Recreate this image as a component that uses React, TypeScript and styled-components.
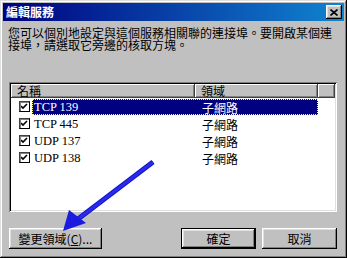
import React from "react";
import styled, { createGlobalStyle, css } from "styled-components";

const GlobalStyle = createGlobalStyle`
  html, body {
    margin: 0;
    padding: 0;
    background: #c0c0c0;
  }
  * {
    box-sizing: border-box;
  }
`;

const uiFont = `"Noto Sans CJK TC", "Liberation Sans", sans-serif`;
const listFont = `"Liberation Serif", "Noto Sans CJK TC", serif`;

const raised = css`
  box-shadow: inset -1px -1px #000000, inset 1px 1px #ffffff,
    inset -2px -2px #808080, inset 2px 2px #dfdfdf;
`;

const Window = styled.div`
  position: relative;
  width: 347px;
  height: 258px;
  padding: 3px;
  background: #c0c0c0;
  box-shadow: inset -1px -1px #000000, inset 1px 1px #dfdfdf,
    inset -2px -2px #808080, inset 2px 2px #ffffff;
  display: flex;
  flex-direction: column;
  font-family: ${uiFont};
  font-size: 12px;
  color: #000;
`;

const TitleBar = styled.div`
  height: 18px;
  display: flex;
  align-items: center;
  justify-content: space-between;
  padding: 0 2px 0 3px;
  background: linear-gradient(to right, #000080, #1084d0);
`;

const TitleText = styled.span`
  color: #ffffff;
  font-weight: bold;
  font-size: 12px;
  line-height: 18px;
`;

const CloseButton = styled.div`
  width: 16px;
  height: 14px;
  background: #c0c0c0;
  ${raised};
  display: flex;
  align-items: center;
  justify-content: center;
`;

const Body = styled.div`
  flex: 1;
  display: flex;
  flex-direction: column;
  padding: 6px 7px 0 5px;
`;

const Description = styled.p`
  margin: 0;
  line-height: 12px;
  width: 330px;
`;

const ListView = styled.div`
  margin: 31px 0 0 1px;
  width: 328px;
  height: 130px;
  background: #ffffff;
  padding: 2px;
  box-shadow: inset 1px 1px #808080, inset -1px -1px #ffffff,
    inset 2px 2px #000000, inset -2px -2px #dfdfdf;
  display: flex;
  flex-direction: column;
`;

const Header = styled.div`
  display: flex;
  height: 14px;
  background: #c0c0c0;
`;

const HeaderCell = styled.div<{ $width?: number }>`
  ${(p) => (p.$width ? `width: ${p.$width}px;` : "flex: 1;")}
  height: 14px;
  line-height: 14px;
  padding-left: 6px;
  box-shadow: inset -1px -1px #404040, inset 1px 1px #ffffff,
    inset -2px -2px #808080;
`;

const Row = styled.div`
  display: flex;
  align-items: center;
  height: 17px;
  font-family: ${listFont};
`;

const CheckCell = styled.div`
  width: 21px;
  display: flex;
  padding-left: 8px;
`;

const CheckBox = styled.div`
  width: 11px;
  height: 11px;
  background: #ffffff;
  border: 1px solid #000000;
  border-top-color: #404040;
  border-left-color: #404040;
  box-shadow: inset 1px 1px #808080;
  display: flex;
  align-items: center;
  justify-content: center;
`;

const RowLabel = styled.div<{ $selected?: boolean }>`
  display: flex;
  height: 16px;
  line-height: 15px;
  border: 1px dotted transparent;
  ${(p) =>
    p.$selected &&
    css`
      background: #000080;
      color: #ffffff;
      border-color: #ffff80;
    `}
`;

const NameCell = styled.div`
  width: 162px;
  padding-left: 1px;
  font-size: 12.5px;
`;

const DomainCell = styled.div`
  width: 122px;
  padding-left: 7px;
  font-family: ${uiFont};
  font-size: 12px;
`;

const ButtonRow = styled.div`
  display: flex;
  margin: 16px 0 0 1px;
  width: 328px;
`;

const Button = styled.div<{ $width: number; $default?: boolean }>`
  width: ${(p) => p.$width}px;
  height: 21px;
  display: flex;
  align-items: center;
  justify-content: center;
  background: #c0c0c0;
  ${raised};
  ${(p) =>
    p.$default &&
    css`
      margin-left: auto;
      margin-right: 6px;
      box-shadow: inset 0 0 0 1px #000000, inset -2px -2px #000000,
        inset 2px 2px #ffffff, inset -3px -3px #808080,
        inset 3px 3px #dfdfdf;
    `}
`;

const Underline = styled.span`
  text-decoration: underline;
`;

const Overlay = styled.svg`
  position: absolute;
  left: 0;
  top: 0;
  pointer-events: none;
`;

const CheckMark = () => (
  <svg width="7" height="7" viewBox="0 0 7 7">
    <path d="M0 3 L2 5 L6 1" stroke="#000" strokeWidth="1.6" fill="none" />
  </svg>
);

const rows = [
  { name: "TCP 139", domain: "子網路", selected: true },
  { name: "TCP 445", domain: "子網路" },
  { name: "UDP 137", domain: "子網路" },
  { name: "UDP 138", domain: "子網路" },
];

export default function App() {
  return (
    <>
      <GlobalStyle />
      <Window>
        <TitleBar>
          <TitleText>編輯服務</TitleText>
          <CloseButton>
            <svg width="8" height="7" viewBox="0 0 8 7">
              <path d="M0.5 0.5 L7.5 6.5 M7.5 0.5 L0.5 6.5" stroke="#000" strokeWidth="1.6" />
            </svg>
          </CloseButton>
        </TitleBar>
        <Body>
          <Description>
            您可以個別地設定與這個服務相關聯的連接埠。要開啟某個連接埠，請選取它旁邊的核取方塊。
          </Description>
          <ListView>
            <Header>
              <HeaderCell $width={184}>名稱</HeaderCell>
              <HeaderCell $width={123}>領域</HeaderCell>
              <HeaderCell />
            </Header>
            {rows.map((r) => (
              <Row key={r.name}>
                <CheckCell>
                  <CheckBox>
                    <CheckMark />
                  </CheckBox>
                </CheckCell>
                <RowLabel $selected={r.selected}>
                  <NameCell>{r.name}</NameCell>
                  <DomainCell>{r.domain}</DomainCell>
                </RowLabel>
              </Row>
            ))}
          </ListView>
          <ButtonRow>
            <Button $width={93}>
              變更領域(<Underline>C</Underline>)...
            </Button>
            <Button $width={75} $default>
              確定
            </Button>
            <Button $width={75}>取消</Button>
          </ButtonRow>
        </Body>
        <Overlay width="347" height="258" viewBox="0 0 347 258">
          <line x1="153" y1="162" x2="78" y2="219" stroke="#1010c8" strokeWidth="5" />
          <line x1="153" y1="162" x2="78" y2="219" stroke="#2a2aee" strokeWidth="3" />
          <polygon points="63,231 69,210 86,223" fill="#1a1ae0" />
        </Overlay>
      </Window>
    </>
  );
}
